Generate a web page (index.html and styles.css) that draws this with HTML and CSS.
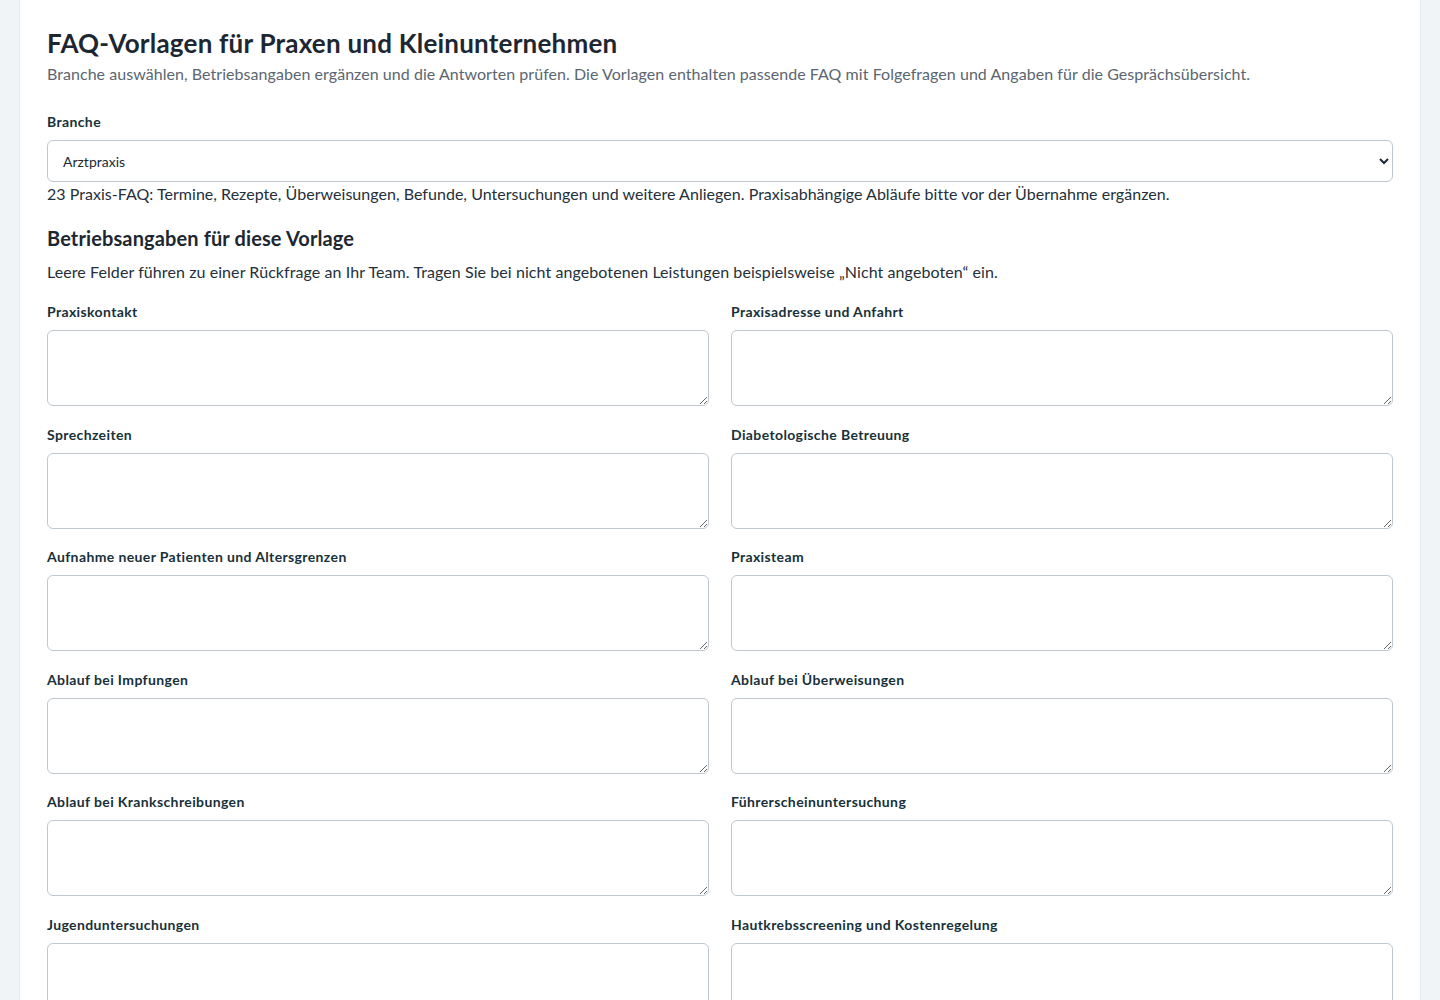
FILE: index.html
```html
<!DOCTYPE html>
<html lang="de">
<head>
<meta charset="utf-8">
<title>FAQ-Vorlagen</title>
<link rel="stylesheet" href="styles.css">
</head>
<body>
<main class="card">
  <h1 class="title">FAQ-Vorlagen für Praxen und Kleinunternehmen</h1>
  <p class="lead">Branche auswählen, Betriebsangaben ergänzen und die Antworten prüfen. Die Vorlagen enthalten passende FAQ mit Folgefragen und Angaben für die Gesprächsübersicht.</p>

  <div class="field branche">
    <label class="label" for="branche">Branche</label>
    <select id="branche" class="select">
      <option>Arztpraxis</option>
    </select>
    <p class="help">23 Praxis-FAQ: Termine, Rezepte, Überweisungen, Befunde, Untersuchungen und weitere Anliegen. Praxisabhängige Abläufe bitte vor der Übernahme ergänzen.</p>
  </div>

  <h2 class="subtitle">Betriebsangaben für diese Vorlage</h2>
  <p class="note">Leere Felder führen zu einer Rückfrage an Ihr Team. Tragen Sie bei nicht angebotenen Leistungen beispielsweise „Nicht angeboten“ ein.</p>

  <div class="grid">
    <div class="field"><label class="label">Praxiskontakt</label><textarea class="area"></textarea></div>
    <div class="field"><label class="label">Praxisadresse und Anfahrt</label><textarea class="area"></textarea></div>
    <div class="field"><label class="label">Sprechzeiten</label><textarea class="area"></textarea></div>
    <div class="field"><label class="label">Diabetologische Betreuung</label><textarea class="area"></textarea></div>
    <div class="field"><label class="label">Aufnahme neuer Patienten und Altersgrenzen</label><textarea class="area"></textarea></div>
    <div class="field"><label class="label">Praxisteam</label><textarea class="area"></textarea></div>
    <div class="field"><label class="label">Ablauf bei Impfungen</label><textarea class="area"></textarea></div>
    <div class="field"><label class="label">Ablauf bei Überweisungen</label><textarea class="area"></textarea></div>
    <div class="field"><label class="label">Ablauf bei Krankschreibungen</label><textarea class="area"></textarea></div>
    <div class="field"><label class="label">Führerscheinuntersuchung</label><textarea class="area"></textarea></div>
    <div class="field"><label class="label">Jugenduntersuchungen</label><textarea class="area"></textarea></div>
    <div class="field"><label class="label">Hautkrebsscreening und Kostenregelung</label><textarea class="area"></textarea></div>
  </div>
</main>
</body>
</html>
```
FILE: styles.css
```css
* { box-sizing: border-box; }
html, body { margin: 0; padding: 0; }
body {
  background: #f0f4f6;
  font-family: "Lato", "Noto Sans", sans-serif;
  color: #1e2a33;
}
.card {
  margin: 0 19px;
  background: #ffffff;
  border-left: 1px solid #e3eaec;
  border-right: 1px solid #e3eaec;
  padding: 28px 27px 40px 27px;
  min-height: 1200px;
}
.title {
  margin: 0;
  font-size: 26px;
  line-height: 31px;
  font-weight: 700;
  letter-spacing: 0.22px;
  color: #1d2731;
}
.lead {
  margin: 3px 0 0;
  font-size: 16px;
  line-height: 24px;
  letter-spacing: 0.05px;
  color: #5b6670;
}
.branche { margin-top: 26px; }
.label {
  display: block;
  font-size: 14px;
  line-height: 20px;
  font-weight: 700;
  letter-spacing: 0.38px;
  color: #183139;
  margin-bottom: 8px;
}
.select {
  display: block;
  width: 100%;
  height: 42px;
  padding: 0 12px 0 11px;
  font-family: "Lato", "Noto Sans", sans-serif;
  font-size: 14px;
  color: #1e2a33;
  background: #ffffff;
  border: 1px solid #bfc8d2;
  border-radius: 6px;
}
.help {
  margin: 0;
  font-size: 16px;
  line-height: 24px;
  letter-spacing: 0.03px;
  color: #24303a;
}
.subtitle {
  margin: 18px 0 0;
  font-size: 20px;
  line-height: 28px;
  font-weight: 700;
  letter-spacing: 0.12px;
  color: #1d2731;
}
.note {
  margin: 8px 0 0;
  font-size: 16px;
  line-height: 24px;
  letter-spacing: 0.08px;
  color: #24303a;
}
.grid {
  margin-top: 18px;
  display: grid;
  grid-template-columns: 1fr 1fr;
  column-gap: 22px;
  row-gap: 18.6px;
}
.field { display: block; }
.area {
  display: block;
  width: 100%;
  height: 76px;
  border: 1px solid #bfc8d2;
  border-radius: 6px;
  background: #fff;
  resize: vertical;
  font-family: "Lato", "Noto Sans", sans-serif;
}
```
